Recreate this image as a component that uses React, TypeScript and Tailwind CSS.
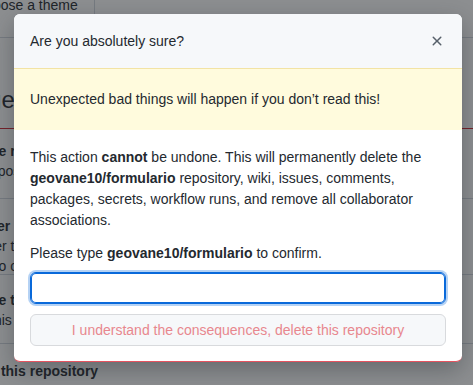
import React from 'react';

const font = { fontFamily: '"Liberation Sans", Arial, sans-serif' };

const XIcon: React.FC = () => (
    <svg width="16" height="16" viewBox="0 0 16 16" fill="currentColor">
        <path d="M3.72 3.72a.75.75 0 0 1 1.06 0L8 6.94l3.22-3.22a.749.749 0 0 1 1.275.326.749.749 0 0 1-.215.734L9.06 8l3.22 3.22a.749.749 0 0 1-.326 1.275.749.749 0 0 1-.734-.215L8 9.06l-3.22 3.22a.751.751 0 0 1-1.042-.018.751.751 0 0 1-.018-1.042L6.94 8 3.72 4.78a.75.75 0 0 1 0-1.06Z" />
    </svg>
);

const dangerRows = [
    { title: 'Change repository visibility', desc: 'This repository is currently public.', cls: 'pt-[12px] h-[70px]' },
    {
        title: 'Transfer ownership',
        desc: 'Transfer this repository to another user or to an organization where you have the ability to create repositories.',
        cls: 'pt-[17px] h-[76px]',
    },
    { title: 'Archive this repository', desc: 'Mark this repository as archived and read-only.', cls: 'pt-[15px] h-[69px]' },
    { title: 'Delete this repository', desc: 'Once you delete a repository, there is no going back.', cls: 'pt-[17px]' },
];

const App: React.FC = () => {
    return (
        <div className="relative w-[473px] h-[385px] overflow-hidden bg-white text-[#24292f]" style={font}>
            {/* Settings page underneath */}
            <div className="flex flex-col">
                <div className="h-[38px] border-b border-[#d0d7de] flex items-start">
                    <div className="w-[120px] ml-[-25px] h-[20px] border-r border-[#d0d7de] text-sm leading-[12px] mt-[-1px]">
                        Choose a theme
                    </div>
                </div>
                <h2 className="ml-[-56px] mt-[48px] text-2xl leading-[28px]">Danger Zone</h2>
                <div className="ml-[-62px] mt-[14px] w-[600px] border border-[#cf222e] rounded-md">
                    {dangerRows.map((row) => (
                        <div key={row.title} className={`px-4 border-b border-[#d0d7de] ${row.cls}`}>
                            <div className="text-sm font-bold leading-[20px]">{row.title}</div>
                            <div className="text-sm leading-[20px] w-[530px]">{row.desc}</div>
                        </div>
                    ))}
                </div>
            </div>

            {/* Backdrop */}
            <div className="absolute inset-0 bg-[rgba(27,31,36,0.5)]" />

            {/* Dialog */}
            <div className="absolute left-[14px] top-[14px] w-[448px] bg-white rounded-md overflow-hidden border-b border-[#e5535f] shadow-[0_8px_24px_rgba(30,34,40,0.35)]">
                <div className="h-[54px] px-4 flex items-center justify-between bg-[#f6f8fa]">
                    <h3 className="text-sm leading-[21px] text-[#24292f] mt-[1px]">Are you absolutely sure?</h3>
                    <button className="text-[#57606a] mr-[1px]">
                        <XIcon />
                    </button>
                </div>
                <div className="border-t border-[#f2e3a4] bg-[#fffbdd] px-4 py-5 text-sm leading-[21px]">
                    Unexpected bad things will happen if you don’t read this!
                </div>
                <div className="px-4 pt-[17px] pb-[15px] text-sm leading-[21px]">
                    <p className="mb-3">
                        This action <strong className="font-bold">cannot</strong> be undone. This will permanently delete the{' '}
                        <strong className="font-bold">geovane10/formulario</strong> repository, wiki, issues, comments, packages,
                        secrets, workflow runs, and remove all collaborator associations.
                    </p>
                    <p>
                        Please type <strong className="font-bold">geovane10/formulario</strong> to confirm.
                    </p>
                    <input
                        type="text"
                        className="mt-2 block w-full h-[32px] px-3 rounded-md border border-[#0969da] bg-white outline-none shadow-[inset_0_0_0_1px_#0969da,0_0_0_2px_rgba(9,105,218,0.3)]"
                    />
                    <button
                        disabled
                        className="mt-[10px] block w-full h-[32px] rounded-md border border-[#d8dadd] bg-[#f6f8fa] text-sm font-medium text-[#e8878e]"
                    >
                        I understand the consequences, delete this repository
                    </button>
                </div>
            </div>
        </div>
    );
};

export default App;
